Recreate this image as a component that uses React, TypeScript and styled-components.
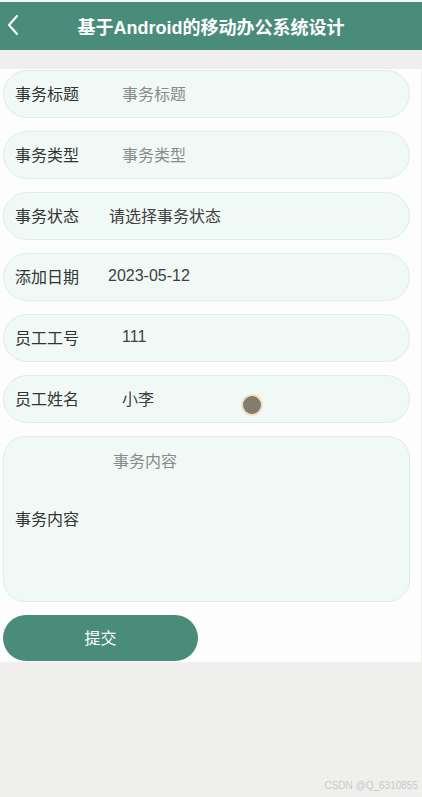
import React from 'react';
import styled, { createGlobalStyle } from 'styled-components';

const GlobalStyle = createGlobalStyle`
  html, body {
    margin: 0;
    padding: 0;
    background: #efefed;
    font-family: "Liberation Sans", "Noto Sans CJK SC", sans-serif;
  }
`;

interface FieldProps {
  label: string;
  value: string;
  placeholder?: boolean;
  inset: number;
}

const Screen = styled.div`
  width: 422px;
  min-height: 797px;
  background: #efefed;
  position: relative;
  border-top: 2px solid #f4f6f5;
  box-sizing: border-box;
`;

const Header = styled.header`
  height: 48px;
  background: #4a8c7a;
  display: flex;
  align-items: center;
  justify-content: center;
  position: relative;
`;

const BackButton = styled.div`
  position: absolute;
  left: 6px;
  top: 10px;
  width: 16px;
  height: 26px;
  display: flex;
  align-items: center;
`;

const Title = styled.h1`
  margin: 0;
  color: #ffffff;
  font-size: 18px;
  font-weight: bold;
`;

const Form = styled.main`
  margin-top: 19px;
  width: 421px;
  background: #fdfdfd;
  padding: 1px 0 1px 3px;
  box-sizing: border-box;
  display: flex;
  flex-direction: column;
  gap: 13px;
`;

const Row = styled.div<{ $tall?: boolean }>`
  width: 407px;
  height: ${(p) => (p.$tall ? '166px' : '48px')};
  box-sizing: border-box;
  border: 1px solid #d9efe9;
  background: #f1f9f7;
  border-radius: ${(p) => (p.$tall ? '22px' : '24px')};
  display: flex;
  align-items: center;
  padding: 0 0 3px 11px;
  position: relative;
`;

const Label = styled.span`
  width: 64px;
  font-size: 16px;
  color: #333333;
  flex-shrink: 0;
`;

const Value = styled.span<{ $placeholder?: boolean; $inset: number }>`
  margin-left: ${(p) => p.$inset}px;
  font-size: 16px;
  color: ${(p) => (p.$placeholder ? '#8a8a8a' : '#404040')};
`;

const AreaPlaceholder = styled.span`
  position: absolute;
  left: 109px;
  top: 11px;
  font-size: 16px;
  color: #8a8a8a;
`;

const Submit = styled.button`
  width: 195px;
  height: 46px;
  border: none;
  border-radius: 23px;
  background: #4a8c7a;
  color: #ffffff;
  font-family: inherit;
  font-size: 16px;
  padding-bottom: 3px;
`;

const TouchDot = styled.div`
  position: absolute;
  left: 243px;
  top: 394px;
  width: 18px;
  height: 18px;
  border-radius: 50%;
  background: #827c6c;
  box-shadow: 0 0 0 2px #efe3c2;
`;

const Watermark = styled.div`
  position: absolute;
  right: 4px;
  bottom: 6px;
  font-size: 10px;
  color: #c9c9c9;
`;

const Field: React.FC<FieldProps> = ({ label, value, placeholder, inset }) => (
  <Row>
    <Label>{label}</Label>
    <Value $placeholder={placeholder} $inset={inset}>{value}</Value>
  </Row>
);

const App: React.FC = () => {
  return (
    <Screen>
      <GlobalStyle />
      <Header>
        <BackButton>
          <svg width="14" height="24" viewBox="0 0 14 24" fill="none">
            <path d="M11 3 L3 12 L11 21" stroke="#ffffff" strokeWidth="2" strokeLinecap="round" strokeLinejoin="round" />
          </svg>
        </BackButton>
        <Title>基于Android的移动办公系统设计</Title>
      </Header>
      <Form>
        <Field label="事务标题" value="事务标题" placeholder inset={43} />
        <Field label="事务类型" value="事务类型" placeholder inset={43} />
        <Field label="事务状态" value="请选择事务状态" inset={30} />
        <Field label="添加日期" value="2023-05-12" inset={29} />
        <Field label="员工工号" value="111" inset={43} />
        <Field label="员工姓名" value="小李" inset={43} />
        <Row $tall>
          <Label>事务内容</Label>
          <AreaPlaceholder>事务内容</AreaPlaceholder>
        </Row>
        <Submit>提交</Submit>
      </Form>
      <TouchDot />
      <Watermark>CSDN @Q_6310855</Watermark>
    </Screen>
  );
};

export default App;
